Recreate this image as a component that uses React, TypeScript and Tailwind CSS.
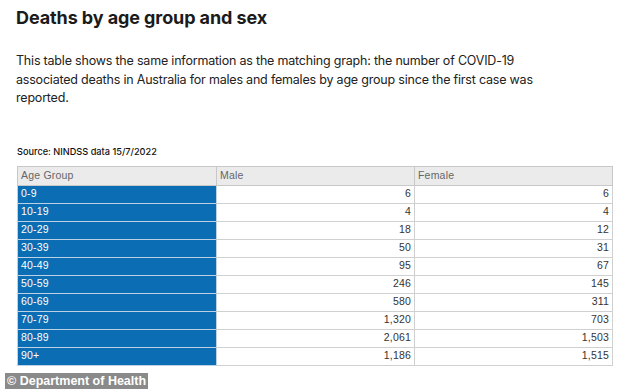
import React from "react";

const rows: [string, string, string][] = [
  ["0-9", "6", "6"],
  ["10-19", "4", "4"],
  ["20-29", "18", "12"],
  ["30-39", "50", "31"],
  ["40-49", "95", "67"],
  ["50-59", "246", "145"],
  ["60-69", "580", "311"],
  ["70-79", "1,320", "703"],
  ["80-89", "2,061", "1,503"],
  ["90+", "1,186", "1,515"],
];

export default function App() {
  return (
    <div
      className="relative w-[634px] h-[389px] overflow-hidden bg-white text-[#1a1a1a]"
      style={{ fontFamily: "Inter, 'Liberation Sans', sans-serif" }}
    >
      <div className="pl-[16px] pt-[6px]">
        <h1 className="text-[18px] leading-[24px] font-bold tracking-[-0.1px] text-[#1b1b1b]">
          Deaths by age group and sex
        </h1>
        <p className="mt-[22px] w-[600px] text-[12.5px] leading-[18.5px] tracking-[-0.2px] text-[#222]">
          This table shows the same information as the matching graph: the number of COVID-19
          <br />
          associated deaths in Australia for males and females by age group since the first case was
          <br />
          reported.
        </p>
        <div className="mt-[38px] ml-[1px] text-[9.2px] leading-[12px] font-medium text-[#111]">
          Source: NINDSS data 15/7/2022
        </div>
        <table
          className="mt-[8px] ml-[1px] w-[596px] border-collapse text-[10.5px] tracking-[0.2px]"
          style={{ fontFamily: "'Liberation Sans', Arial, sans-serif" }}
        >
          <thead>
            <tr className="h-[19px] bg-[#ebebeb] text-[#666]">
              <th className="w-[199px] border border-[#c8c8c8] px-[3px] text-left font-normal">Age Group</th>
              <th className="w-[198px] border border-[#c8c8c8] px-[3px] text-left font-normal">Male</th>
              <th className="border border-[#c8c8c8] px-[3px] text-left font-normal">Female</th>
            </tr>
          </thead>
          <tbody>
            {rows.map(([a, m, f]) => (
              <tr key={a} className="h-[18px]">
                <td className="border border-[#bcd2e4] bg-[#0b6db3] px-[3px] text-left text-white">{a}</td>
                <td className="border border-[#d0d0d0] px-[3px] text-right text-[#333]">{m}</td>
                <td className="border border-[#d0d0d0] px-[3px] text-right text-[#333]">{f}</td>
              </tr>
            ))}
          </tbody>
        </table>
      </div>
      <div
        className="absolute left-[5px] bottom-0 h-[16px] bg-[#8a8a8a] px-[2px] text-[12.5px] leading-[16px] font-bold text-white"
        style={{ fontFamily: "'Liberation Sans', Arial, sans-serif" }}
      >
        © Department of Health
      </div>
    </div>
  );
}
